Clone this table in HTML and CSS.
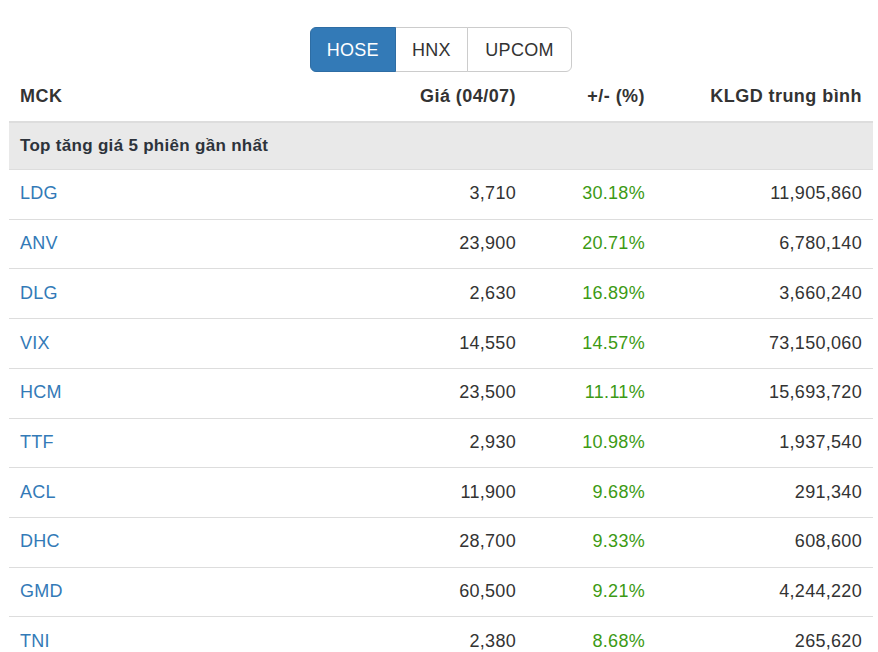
FILE: index.html
```html
<!DOCTYPE html>
<html>
<head>
<meta charset="utf-8">
<link rel="stylesheet" href="styles.css">
</head>
<body>
<div class="wrap">
  <div class="tabs">
    <div class="btn-group">
      <button class="btn active">HOSE</button>
      <button class="btn">HNX</button>
      <button class="btn">UPCOM</button>
    </div>
  </div>
  <table class="tbl">
    <thead>
      <tr>
        <th class="c1">MCK</th>
        <th class="num c2">Giá (04/07)</th>
        <th class="num c3">+/- (%)</th>
        <th class="num c4">KLGD trung bình</th>
      </tr>
    </thead>
    <tbody>
      <tr class="group"><td colspan="4">Top tăng giá 5 phiên gần nhất</td></tr>
      <tr><td><a href="#">LDG</a></td><td class="num">3,710</td><td class="num up">30.18%</td><td class="num">11,905,860</td></tr>
      <tr><td><a href="#">ANV</a></td><td class="num">23,900</td><td class="num up">20.71%</td><td class="num">6,780,140</td></tr>
      <tr><td><a href="#">DLG</a></td><td class="num">2,630</td><td class="num up">16.89%</td><td class="num">3,660,240</td></tr>
      <tr><td><a href="#">VIX</a></td><td class="num">14,550</td><td class="num up">14.57%</td><td class="num">73,150,060</td></tr>
      <tr><td><a href="#">HCM</a></td><td class="num">23,500</td><td class="num up">11.11%</td><td class="num">15,693,720</td></tr>
      <tr><td><a href="#">TTF</a></td><td class="num">2,930</td><td class="num up">10.98%</td><td class="num">1,937,540</td></tr>
      <tr><td><a href="#">ACL</a></td><td class="num">11,900</td><td class="num up">9.68%</td><td class="num">291,340</td></tr>
      <tr><td><a href="#">DHC</a></td><td class="num">28,700</td><td class="num up">9.33%</td><td class="num">608,600</td></tr>
      <tr><td><a href="#">GMD</a></td><td class="num">60,500</td><td class="num up">9.21%</td><td class="num">4,244,220</td></tr>
      <tr><td><a href="#">TNI</a></td><td class="num">2,380</td><td class="num up">8.68%</td><td class="num">265,620</td></tr>
    </tbody>
  </table>
</div>
</body>
</html>
```
FILE: styles.css
```css
html, body {
  margin: 0;
  padding: 0;
  background: #fff;
}
body {
  font-family: "Liberation Sans", Arial, Helvetica, sans-serif;
  font-size: 18px;
  color: #333;
  letter-spacing: 0.3px;
}
.wrap {
  padding: 27px 5px 0 9px;
}
.tabs {
  display: flex;
  justify-content: center;
}
.btn-group {
  display: flex;
}
.btn {
  font-family: inherit;
  font-size: 18px;
  letter-spacing: 0.3px;
  line-height: 24px;
  padding: 9.5px 16px;
  background: #fff;
  color: #333;
  border: 1px solid #ccc;
  margin-left: -1px;
  cursor: pointer;
}
.btn:last-child {
  padding: 9.5px 17.5px;
}
.btn:first-child {
  margin-left: 0;
  border-radius: 6px 0 0 6px;
}
.btn:last-child {
  border-radius: 0 6px 6px 0;
}
.btn.active {
  background: #337ab7;
  border-color: #2e6da4;
  color: #fff;
  position: relative;
}
.tbl {
  width: 864px;
  border-collapse: collapse;
  border-spacing: 0;
}
.tbl th, .tbl td {
  padding: 11.5px 11px;
  line-height: 1.42857;
  text-align: left;
  vertical-align: middle;
}
.tbl th {
  font-weight: bold;
  letter-spacing: 0.45px;
  border-bottom: 2px solid #ddd;
}
.tbl td {
  border-top: 1px solid #ddd;
}
.tbl .num {
  text-align: right;
}
.c2 { width: 140px; }
.c3 { width: 107px; }
.c4 { width: 195px; }
.tbl tr.group td {
  background: #e9e9e9;
  font-weight: bold;
  font-size: 17px;
  letter-spacing: 0.3px;
  padding: 11px 11px;
  border-top: 0;
  color: #2d333b;
}
.tbl a {
  color: #337ab7;
  text-decoration: none;
}
.up {
  color: #3c9a14;
}
```
